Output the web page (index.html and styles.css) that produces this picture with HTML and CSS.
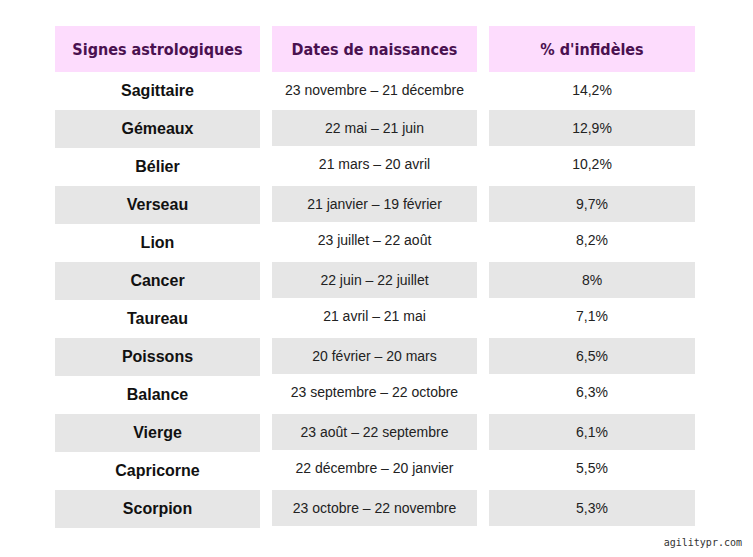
FILE: index.html
```html
<!DOCTYPE html>
<html lang="fr">
<head>
<meta charset="utf-8">
<link rel="stylesheet" href="styles.css">
</head>
<body>
<div class="table">
  <div class="head">Signes astrologiques</div>
  <div class="head">Dates de naissances</div>
  <div class="head">% d'infidèles</div>

  <div class="cell sign">Sagittaire</div><div class="cell"><span>23 novembre – 21 décembre</span></div><div class="cell"><span>14,2%</span></div>
  <div class="cell sign alt">Gémeaux</div><div class="cell"><span class="alt">22 mai – 21 juin</span></div><div class="cell"><span class="alt">12,9%</span></div>
  <div class="cell sign">Bélier</div><div class="cell"><span class="up">21 mars – 20 avril</span></div><div class="cell"><span class="up">10,2%</span></div>
  <div class="cell sign alt">Verseau</div><div class="cell"><span class="alt">21 janvier – 19 février</span></div><div class="cell"><span class="alt">9,7%</span></div>
  <div class="cell sign">Lion</div><div class="cell"><span class="up">23 juillet – 22 août</span></div><div class="cell"><span class="up">8,2%</span></div>
  <div class="cell sign alt">Cancer</div><div class="cell"><span class="alt">22 juin – 22 juillet</span></div><div class="cell"><span class="alt">8%</span></div>
  <div class="cell sign">Taureau</div><div class="cell"><span class="up">21 avril – 21 mai</span></div><div class="cell"><span class="up">7,1%</span></div>
  <div class="cell sign alt">Poissons</div><div class="cell"><span class="alt">20 février – 20 mars</span></div><div class="cell"><span class="alt">6,5%</span></div>
  <div class="cell sign">Balance</div><div class="cell"><span class="up">23 septembre – 22 octobre</span></div><div class="cell"><span class="up">6,3%</span></div>
  <div class="cell sign alt">Vierge</div><div class="cell"><span class="alt">23 août – 22 septembre</span></div><div class="cell"><span class="alt">6,1%</span></div>
  <div class="cell sign">Capricorne</div><div class="cell"><span class="up">22 décembre – 20 janvier</span></div><div class="cell"><span class="up">5,5%</span></div>
  <div class="cell sign alt">Scorpion</div><div class="cell"><span class="alt">23 octobre – 22 novembre</span></div><div class="cell"><span class="alt">5,3%</span></div>
</div>
<div class="credit">agilitypr.com</div>
</body>
</html>
```
FILE: styles.css
```css
html, body {
  margin: 0;
  padding: 0;
  background: #ffffff;
}
body {
  width: 753px;
  height: 557px;
  position: relative;
  font-family: "Liberation Sans", Arial, sans-serif;
}
.table {
  display: grid;
  grid-template-columns: 205px 205px 206px;
  grid-auto-rows: 38px;
  grid-template-rows: 46px;
  column-gap: 12px;
  padding: 26px 0 0 55px;
}
.head {
  background: #fddcfd;
  color: #4a1150;
  font-family: "DejaVu Sans Condensed", "DejaVu Sans", sans-serif;
  font-stretch: condensed;
  font-weight: bold;
  font-size: 16px;
  display: flex;
  align-items: center;
  justify-content: center;
}
.cell {
  display: flex;
  flex-direction: column;
  font-size: 14px;
  color: #222222;
}
.cell span {
  height: 36px;
  display: flex;
  align-items: center;
  justify-content: center;
}
.cell span.up {
  height: 32px;
}
.sign {
  align-items: center;
  justify-content: center;
  font-weight: bold;
  font-size: 16px;
  color: #111111;
}
.alt {
  background: #e6e6e6;
}
.credit {
  position: absolute;
  right: 11px;
  bottom: 9px;
  font-family: "DejaVu Sans Mono", monospace;
  font-size: 10px;
  color: #333333;
}
```
